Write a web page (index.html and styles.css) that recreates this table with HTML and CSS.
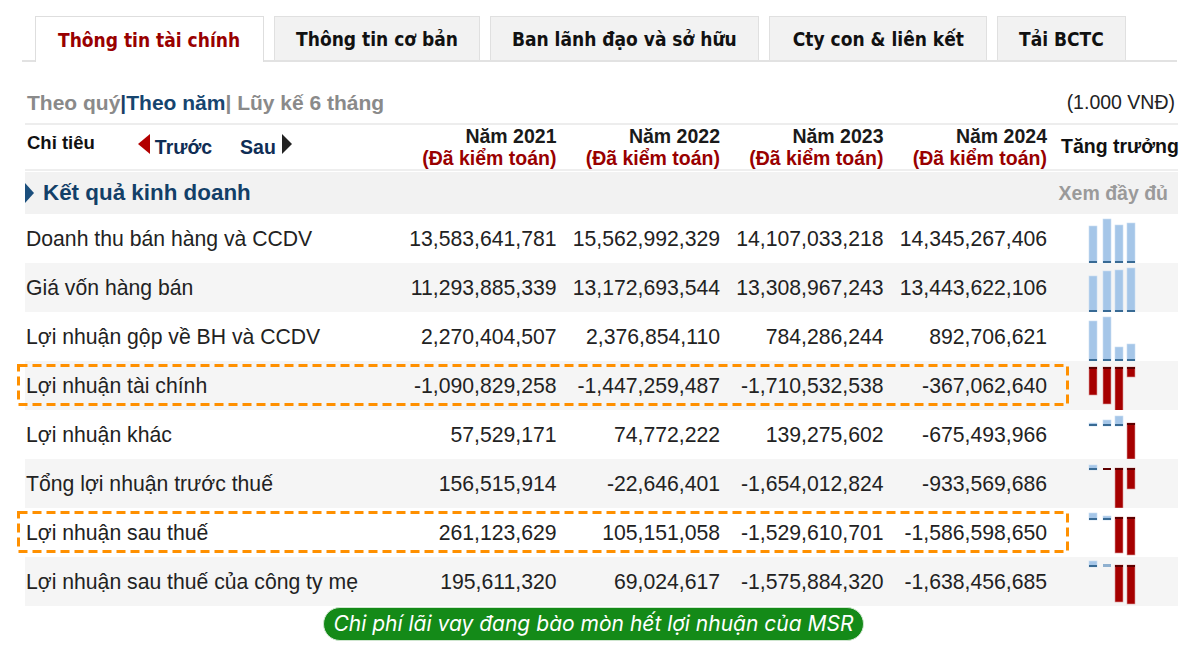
FILE: index.html
```html
<!DOCTYPE html>
<html lang="vi">
<head>
<meta charset="utf-8">
<title>Thông tin tài chính</title>
<link rel="stylesheet" href="styles.css">
</head>
<body>
<div class="page">
  <nav class="tabs">
    <div class="tab active">Thông tin tài chính</div>
    <div class="tab">Thông tin cơ bản</div>
    <div class="tab">Ban lãnh đạo và sở hữu</div>
    <div class="tab wide">Cty con &amp; liên kết</div>
    <div class="tab">Tải BCTC</div>
  </nav>

  <div class="subnav">
    <div class="periods"><span class="muted">Theo quý</span><span class="sep">|</span><span class="current">Theo năm</span><span class="muted">| Lũy kế 6 tháng</span></div>
    <div class="unit">(1.000 VNĐ)</div>
  </div>

  <div class="table">
    <div class="row thead">
      <div class="cell head-label">
        <span class="chi-tieu">Chỉ tiêu</span>
        <span class="pager prev"><span class="tri-left"></span>Trước</span>
        <span class="pager next">Sau<span class="tri-right"></span></span>
      </div>
      <div class="cell num year"><span class="y">Năm 2021</span><span class="audit">(Đã kiểm toán)</span></div>
      <div class="cell num year"><span class="y">Năm 2022</span><span class="audit">(Đã kiểm toán)</span></div>
      <div class="cell num year"><span class="y">Năm 2023</span><span class="audit">(Đã kiểm toán)</span></div>
      <div class="cell num year"><span class="y">Năm 2024</span><span class="audit">(Đã kiểm toán)</span></div>
      <div class="cell growth-head">Tăng trưởng</div>
    </div>

    <div class="section">
      <div class="section-title"><span class="tri-sec"></span>Kết quả kinh doanh</div>
      <div class="section-more">Xem đầy đủ</div>
    </div>

    <div class="row data">
      <div class="cell label">Doanh thu bán hàng và CCDV</div>
      <div class="cell num">13,583,641,781</div>
      <div class="cell num">15,562,992,329</div>
      <div class="cell num">14,107,033,218</div>
      <div class="cell num">14,345,267,406</div>
      <div class="cell growth">
        <svg class="spark" width="48" height="49">
          <rect class="pb" x="0" y="12" width="8" height="37"/><rect class="ps" x="0" y="47" width="8" height="2"/>
          <rect class="pb" x="14" y="5" width="8" height="44"/><rect class="ps" x="14" y="47" width="8" height="2"/>
          <rect class="pb" x="26" y="11" width="8" height="38"/><rect class="ps" x="26" y="47" width="8" height="2"/>
          <rect class="pb" x="38" y="9" width="8" height="40"/><rect class="ps" x="38" y="47" width="8" height="2"/>
        </svg>
      </div>
    </div>

    <div class="row data alt">
      <div class="cell label">Giá vốn hàng bán</div>
      <div class="cell num">11,293,885,339</div>
      <div class="cell num">13,172,693,544</div>
      <div class="cell num">13,308,967,243</div>
      <div class="cell num">13,443,622,106</div>
      <div class="cell growth">
        <svg class="spark" width="48" height="49">
          <rect class="pb" x="0" y="13" width="8" height="36"/><rect class="ps" x="0" y="47" width="8" height="2"/>
          <rect class="pb" x="14" y="8" width="8" height="41"/><rect class="ps" x="14" y="47" width="8" height="2"/>
          <rect class="pb" x="26" y="7" width="8" height="42"/><rect class="ps" x="26" y="47" width="8" height="2"/>
          <rect class="pb" x="38" y="5" width="8" height="44"/><rect class="ps" x="38" y="47" width="8" height="2"/>
        </svg>
      </div>
    </div>

    <div class="row data">
      <div class="cell label">Lợi nhuận gộp về BH và CCDV</div>
      <div class="cell num">2,270,404,507</div>
      <div class="cell num">2,376,854,110</div>
      <div class="cell num">784,286,244</div>
      <div class="cell num">892,706,621</div>
      <div class="cell growth">
        <svg class="spark" width="48" height="49">
          <rect class="pb" x="0" y="9" width="8" height="40"/><rect class="ps" x="0" y="47" width="8" height="2"/>
          <rect class="pb" x="14" y="5" width="8" height="44"/><rect class="ps" x="14" y="47" width="8" height="2"/>
          <rect class="pb" x="26" y="35" width="8" height="14"/><rect class="ps" x="26" y="47" width="8" height="2"/>
          <rect class="pb" x="38" y="32" width="8" height="17"/><rect class="ps" x="38" y="47" width="8" height="2"/>
        </svg>
      </div>
    </div>

    <div class="row data alt marked">
      <div class="cell label">Lợi nhuận tài chính</div>
      <div class="cell num">-1,090,829,258</div>
      <div class="cell num">-1,447,259,487</div>
      <div class="cell num">-1,710,532,538</div>
      <div class="cell num">-367,062,640</div>
      <div class="cell growth">
        <svg class="spark" width="48" height="49">
          <rect class="nb" x="0" y="6" width="8" height="28"/><rect class="ns" x="0" y="6" width="8" height="2"/>
          <rect class="nb" x="14" y="6" width="8" height="37"/><rect class="ns" x="14" y="6" width="8" height="2"/>
          <rect class="nb" x="26" y="6" width="8" height="44"/><rect class="ns" x="26" y="6" width="8" height="2"/>
          <rect class="nb" x="38" y="6" width="8" height="10"/><rect class="ns" x="38" y="6" width="8" height="2"/>
        </svg>
      </div>
      <svg class="mark" width="1052" height="42"><rect x="1.5" y="1.5" width="1049" height="39"/></svg>
    </div>

    <div class="row data">
      <div class="cell label">Lợi nhuận khác</div>
      <div class="cell num">57,529,171</div>
      <div class="cell num">74,772,222</div>
      <div class="cell num">139,275,602</div>
      <div class="cell num">-675,493,966</div>
      <div class="cell growth">
        <svg class="spark" width="48" height="49">
          <rect class="pb" x="0" y="13" width="8" height="3"/><rect class="ps" x="0" y="14" width="8" height="2"/>
          <rect class="pb" x="14" y="10" width="8" height="6"/><rect class="ps" x="14" y="14" width="8" height="2"/>
          <rect class="pb" x="26" y="6" width="8" height="10"/><rect class="ps" x="26" y="14" width="8" height="2"/>
          <rect class="nb" x="38" y="13" width="8" height="36"/><rect class="ns" x="38" y="13" width="8" height="2"/>
        </svg>
      </div>
    </div>

    <div class="row data alt">
      <div class="cell label">Tổng lợi nhuận trước thuế</div>
      <div class="cell num">156,515,914</div>
      <div class="cell num">-22,646,401</div>
      <div class="cell num">-1,654,012,824</div>
      <div class="cell num">-933,569,686</div>
      <div class="cell growth">
        <svg class="spark" width="48" height="49">
          <rect class="pb" x="0" y="6" width="8" height="5"/><rect class="ps" x="0" y="9" width="8" height="2"/>
          <rect class="ns" x="14" y="9" width="8" height="2"/>
          <rect class="nb" x="26" y="9" width="8" height="40"/><rect class="ns" x="26" y="9" width="8" height="2"/>
          <rect class="nb" x="38" y="9" width="8" height="21"/><rect class="ns" x="38" y="9" width="8" height="2"/>
        </svg>
      </div>
    </div>

    <div class="row data marked">
      <div class="cell label">Lợi nhuận sau thuế</div>
      <div class="cell num">261,123,629</div>
      <div class="cell num">105,151,058</div>
      <div class="cell num">-1,529,610,701</div>
      <div class="cell num">-1,586,598,650</div>
      <div class="cell growth">
        <svg class="spark" width="48" height="49">
          <rect class="pb" x="0" y="5" width="8" height="7"/><rect class="ps" x="0" y="10" width="8" height="2"/>
          <rect class="pb" x="14" y="8" width="8" height="4"/><rect class="ps" x="14" y="10" width="8" height="2"/>
          <rect class="nb" x="26" y="9" width="8" height="36"/><rect class="ns" x="26" y="9" width="8" height="2"/>
          <rect class="nb" x="38" y="9" width="8" height="38"/><rect class="ns" x="38" y="9" width="8" height="2"/>
        </svg>
      </div>
      <svg class="mark" width="1052" height="42"><rect x="1.5" y="1.5" width="1049" height="39"/></svg>
    </div>

    <div class="row data alt">
      <div class="cell label">Lợi nhuận sau thuế của công ty mẹ</div>
      <div class="cell num">195,611,320</div>
      <div class="cell num">69,024,617</div>
      <div class="cell num">-1,575,884,320</div>
      <div class="cell num">-1,638,456,685</div>
      <div class="cell growth">
        <svg class="spark" width="48" height="49">
          <rect class="pb" x="0" y="4" width="8" height="6"/><rect class="ps" x="0" y="8" width="8" height="2"/>
          <rect class="pl" x="14" y="7" width="8" height="3"/>
          <rect class="nb" x="26" y="8" width="8" height="37"/><rect class="ns" x="26" y="8" width="8" height="2"/>
          <rect class="nb" x="38" y="8" width="8" height="39"/><rect class="ns" x="38" y="8" width="8" height="2"/>
        </svg>
      </div>
    </div>
  </div>

  <div class="caption"><span class="pill">Chi phí lãi vay đang bào mòn hết lợi nhuận của MSR</span></div>
</div>
</body>
</html>
```

FILE: styles.css
```css
* { box-sizing: border-box; }

html, body {
  margin: 0;
  padding: 0;
  background: #ffffff;
}

body {
  font-family: "Liberation Sans", Arial, sans-serif;
  color: #222;
}

.page {
  width: 1187px;
  padding-top: 16px;
}

/* Tabs */
.tabs {
  display: flex;
  gap: 10px;
  margin-left: 22px;
  width: 1155px;
  padding-left: 13px;
  border-bottom: 2px solid #e2e2e2;
  height: 46px;
}

.tab {
  height: 44px;
  padding: 0 21px;
  display: flex;
  align-items: center;
  font-family: "DejaVu Sans Condensed", "DejaVu Sans", sans-serif;
  font-weight: bold;
  font-size: 19px;
  color: #111;
  background: #f2f2f2;
  border: 1px solid #e0e0e0;
  border-bottom: none;
  white-space: nowrap;
}

.tab.wide {
  padding: 0 22px 0 23px;
}

.tab.active {
  background: #fff;
  color: #990000;
  height: 46px;
  margin-bottom: -2px;
  padding: 0 23px 0 22px;
  border-color: #dedede;
}

/* Sub navigation */
.subnav {
  display: flex;
  justify-content: space-between;
  align-items: center;
  height: 61px;
  padding: 20px 12px 0 27px;
  font-size: 21px;
}

.periods {
  font-weight: bold;
}

.muted { color: #8a8a8a; }
.sep { color: #1c3f66; }
.current { color: #16456f; }

.unit {
  color: #222;
  font-size: 19.5px;
}

/* Table */
.table {
  margin-left: 25px;
  width: 1153px;
  border-top: 2px solid #ededed;
}

.row {
  display: grid;
  grid-template-columns: 368px 163.5px 163.5px 163.5px 163.5px 131px;
  position: relative;
}

.thead {
  height: 46px;
  border-bottom: 2px solid #eeeeee;
  font-weight: bold;
  font-size: 19.5px;
  color: #1a1a1a;
}

.cell.num {
  text-align: right;
}

.year {
  display: flex;
  flex-direction: column;
  align-items: flex-end;
  line-height: 22px;
}

.audit {
  color: #990000;
}

.head-label {
  display: flex;
  align-items: flex-start;
  padding: 6px 0 0 2px;
  font-size: 18.5px;
}

.chi-tieu {
  color: #111;
  line-height: 24px;
}

.pager {
  display: flex;
  align-items: center;
  color: #0f2d55;
  font-size: 19.5px;
  line-height: 24px;
  margin-top: 4px;
}

.prev { margin-left: 43px; }
.next { margin-left: 28px; }

.tri-left {
  width: 0;
  height: 0;
  border-top: 10px solid transparent;
  border-bottom: 10px solid transparent;
  border-right: 12px solid #b30000;
  margin-right: 5px;
  margin-top: -6px;
}

.tri-right {
  width: 0;
  height: 0;
  border-top: 10px solid transparent;
  border-bottom: 10px solid transparent;
  border-left: 10px solid #222;
  margin-left: 6px;
  margin-top: -6px;
}

.growth-head {
  padding: 10px 0 0 14px;
  white-space: nowrap;
  color: #111;
  line-height: 22px;
}

.section {
  display: flex;
  justify-content: space-between;
  align-items: center;
  height: 42px;
  background: #f2f2f2;
  margin-top: 1px;
  padding: 0 10px 0 0;
}

.section-title {
  display: flex;
  align-items: center;
  font-weight: bold;
  font-size: 22.4px;
  color: #123f68;
}

.tri-sec {
  width: 0;
  height: 0;
  border-top: 10px solid transparent;
  border-bottom: 10px solid transparent;
  border-left: 9px solid #1b4f7d;
  margin-right: 9px;
}

.section-more {
  font-weight: bold;
  font-size: 19.5px;
  color: #9a9a9a;
}

.data {
  height: 49px;
  font-size: 21.2px;
  color: #222;
  background: #fff;
}

.data.alt {
  background: #f5f5f5;
}

.data .cell {
  display: flex;
  align-items: center;
  white-space: nowrap;
}

.data .label {
  padding-left: 1px;
}

.data .num {
  justify-content: flex-end;
}

.data .growth {
  align-items: flex-start;
  padding-left: 42px;
}

.spark {
  display: block;
  overflow: visible;
}

.pb { fill: #a5c6e8; stroke: #c9ddf1; stroke-width: 0.6; }
.ps { fill: #386a94; }
.pl { fill: #8fb0cf; }
.nb { fill: #a60000; stroke: #d99a9a; stroke-width: 0.6; }
.ns { fill: #5e0000; }

/* highlight annotation */
.mark {
  position: absolute;
  left: -8px;
  top: 3px;
  overflow: visible;
  pointer-events: none;
}

.mark rect {
  fill: none;
  stroke: #ff9000;
  stroke-width: 3;
  stroke-dasharray: 9 5;
}

/* caption */
.caption {
  display: flex;
  justify-content: center;
  padding-top: 1px;
}

.pill {
  display: inline-block;
  background: #148a18;
  color: #fff;
  font-family: Inter, "Noto Sans", sans-serif;
  font-style: italic;
  font-size: 21px;
  line-height: 32px;
  height: 34px;
  padding: 0 9px;
  border-radius: 17px;
  border: 1px solid #cfe6cf;
}
```
